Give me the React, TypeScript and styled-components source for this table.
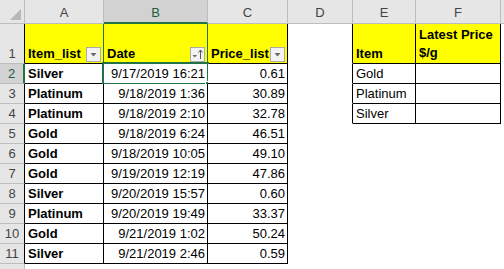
import styled, { createGlobalStyle } from "styled-components";

const GREEN = "#217346";
const HEAD_BG = "#e6e6e6";
const HEAD_LINE = "#bdbdbd";

const GlobalStyle = createGlobalStyle`
    html, body {
        margin: 0;
        padding: 0;
        background: #fff;
        overflow: hidden;
    }
    body {
        font-family: "Liberation Sans", Arial, sans-serif;
    }
`;

const Sheet = styled.div`
    display: grid;
    grid-template-columns: 25px 79px 104px 80px 65px 63px 85px 30px;
    grid-template-rows: 24px 40px repeat(11, 20px);
    width: 504px;
    height: 269px;
    overflow: hidden;
    font-size: 13px;
    color: #000;
`;

const Corner = styled.div`
    background: ${HEAD_BG};
    border-right: 1px solid ${HEAD_LINE};
    border-bottom: 1px solid ${HEAD_LINE};
    display: flex;
    align-items: flex-end;
    justify-content: flex-end;
    padding: 0 3px 3px 0;
    box-sizing: border-box;
`;

const ColHead = styled.div<{ $active?: boolean }>`
    background: ${p => (p.$active ? "#d2d2d2" : HEAD_BG)};
    color: ${p => (p.$active ? "#1d5e3a" : "#444")};
    border-right: 1px solid ${HEAD_LINE};
    border-bottom: ${p => (p.$active ? `2px solid ${GREEN}` : `1px solid ${HEAD_LINE}`)};
    box-sizing: border-box;
    display: flex;
    align-items: flex-end;
    justify-content: center;
    padding-bottom: ${p => (p.$active ? "2px" : "3px")};
    line-height: 15px;
`;

const RowHead = styled.div<{ $active?: boolean; $edge?: string }>`
    background: ${p => (p.$active ? "#d2d2d2" : HEAD_BG)};
    color: ${p => (p.$active ? "#1d5e3a" : "#444")};
    border-bottom: 1px solid ${HEAD_LINE};
    border-right: ${p => (p.$active ? `2px solid ${GREEN}` : `1px solid ${p.$edge || HEAD_LINE}`)};
    box-sizing: border-box;
    display: flex;
    align-items: flex-end;
    justify-content: center;
    padding-bottom: 1px;
    line-height: 17px;
`;

const Cell = styled.div<{
    $fill?: string;
    $bold?: boolean;
    $align?: "left" | "right";
    $r?: string;
    $b?: string;
}>`
    position: relative;
    box-sizing: border-box;
    background: ${p => p.$fill || "#fff"};
    font-weight: ${p => (p.$bold ? 700 : 400)};
    border-right: 1px solid ${p => p.$r || "transparent"};
    border-bottom: 1px solid ${p => p.$b || "transparent"};
    display: flex;
    align-items: flex-end;
    justify-content: ${p => (p.$align === "right" ? "flex-end" : "space-between")};
    padding: 0 2px 1px 3px;
    line-height: 17px;
    white-space: nowrap;
`;

const Wrapped = styled.span`
    white-space: normal;
    line-height: 18px;
`;

const FilterBtn = styled.span`
    flex: none;
    width: 15px;
    height: 15px;
    box-sizing: border-box;
    background: #f3f3f3;
    border: 1px solid #ababab;
    display: flex;
    align-items: center;
    justify-content: center;
`;

const Selection = styled.div`
    position: absolute;
    top: -2px;
    left: -2px;
    right: -2px;
    bottom: -2px;
    border: 2px solid ${GREEN};
    pointer-events: none;
`;

const Handle = styled.div`
    position: absolute;
    right: -5px;
    bottom: -5px;
    width: 5px;
    height: 5px;
    background: ${GREEN};
    border: 1px solid #fff;
`;

function Arrow() {
    return (
        <svg width="9" height="9" viewBox="0 0 9 9">
            <path d="M1.5 3 L7.5 3 L4.5 6.5 Z" fill="#6a6a6a" />
        </svg>
    );
}

function SortArrow() {
    return (
        <svg width="13" height="13" viewBox="0 0 13 13">
            <path d="M1.5 7 L6 7 L3.75 9.5 Z" fill="#6a6a6a" />
            <path d="M9.5 2 L9.5 11" stroke="#555" strokeWidth="1" />
            <path d="M7.5 4.5 L9.5 2 L11.5 4.5" stroke="#555" strokeWidth="1" fill="none" />
        </svg>
    );
}

function SelectAll() {
    return (
        <svg width="11" height="11" viewBox="0 0 11 11">
            <path d="M11 0 L11 11 L0 11 Z" fill="#b8b8b8" />
        </svg>
    );
}

type Row = { item: string; date: string; price: string };

const rows: Row[] = [
    { item: "Silver", date: "9/17/2019 16:21", price: "0.61" },
    { item: "Platinum", date: "9/18/2019 1:36", price: "30.89" },
    { item: "Platinum", date: "9/18/2019 2:10", price: "32.78" },
    { item: "Gold", date: "9/18/2019 6:24", price: "46.51" },
    { item: "Gold", date: "9/18/2019 10:05", price: "49.10" },
    { item: "Gold", date: "9/19/2019 12:19", price: "47.86" },
    { item: "Silver", date: "9/20/2019 15:57", price: "0.60" },
    { item: "Platinum", date: "9/20/2019 19:49", price: "33.37" },
    { item: "Gold", date: "9/21/2019 1:02", price: "50.24" },
    { item: "Silver", date: "9/21/2019 2:46", price: "0.59" },
];

const lookup = ["Gold", "Platinum", "Silver"];

const YELLOW = "#ffff00";
const INK = "#000";

function App() {
    return (
        <>
            <GlobalStyle />
            <Sheet>
                <Corner>
                    <SelectAll />
                </Corner>
                <ColHead>A</ColHead>
                <ColHead $active>B</ColHead>
                <ColHead>C</ColHead>
                <ColHead>D</ColHead>
                <ColHead>E</ColHead>
                <ColHead>F</ColHead>
                <ColHead />

                <RowHead $edge={INK}>1</RowHead>
                <Cell $fill={YELLOW} $bold $r={GREEN} $b={INK}>
                    <span>Item_list</span>
                    <FilterBtn>
                        <Arrow />
                    </FilterBtn>
                </Cell>
                <Cell $fill={YELLOW} $bold $r={GREEN} $b={GREEN}>
                    <span>Date</span>
                    <FilterBtn>
                        <SortArrow />
                    </FilterBtn>
                </Cell>
                <Cell $fill={YELLOW} $bold $r={INK} $b={INK}>
                    <span>Price_list</span>
                    <FilterBtn>
                        <Arrow />
                    </FilterBtn>
                </Cell>
                <Cell $r={INK} />
                <Cell $fill={YELLOW} $bold $r={INK} $b={INK}>
                    <span>Item</span>
                </Cell>
                <Cell $fill={YELLOW} $bold $r={INK} $b={INK}>
                    <Wrapped>
                        Latest Price
                        <br />
                        $/g
                    </Wrapped>
                </Cell>
                <Cell />

                {rows.map((r, i) => {
                    const n = i + 2;
                    const side = i < lookup.length;
                    return (
                        <div key={n} style={{ display: "contents" }}>
                            <RowHead $active={n === 2} $edge={INK}>
                                {n}
                            </RowHead>
                            <Cell $bold $r={INK} $b={INK}>
                                <span>{r.item}</span>
                            </Cell>
                            <Cell $align="right" $r={INK} $b={INK}>
                                <span>{r.date}</span>
                                {n === 2 && (
                                    <Selection>
                                        <Handle />
                                    </Selection>
                                )}
                            </Cell>
                            <Cell $align="right" $r={INK} $b={INK}>
                                <span>{r.price}</span>
                            </Cell>
                            <Cell $r={side ? INK : undefined} />
                            <Cell $r={side ? INK : undefined} $b={side ? INK : undefined}>
                                {side && <span>{lookup[i]}</span>}
                            </Cell>
                            <Cell $r={side ? INK : undefined} $b={side ? INK : undefined} />
                            <Cell />
                        </div>
                    );
                })}

                <RowHead />
            </Sheet>
        </>
    );
}

export default App;
